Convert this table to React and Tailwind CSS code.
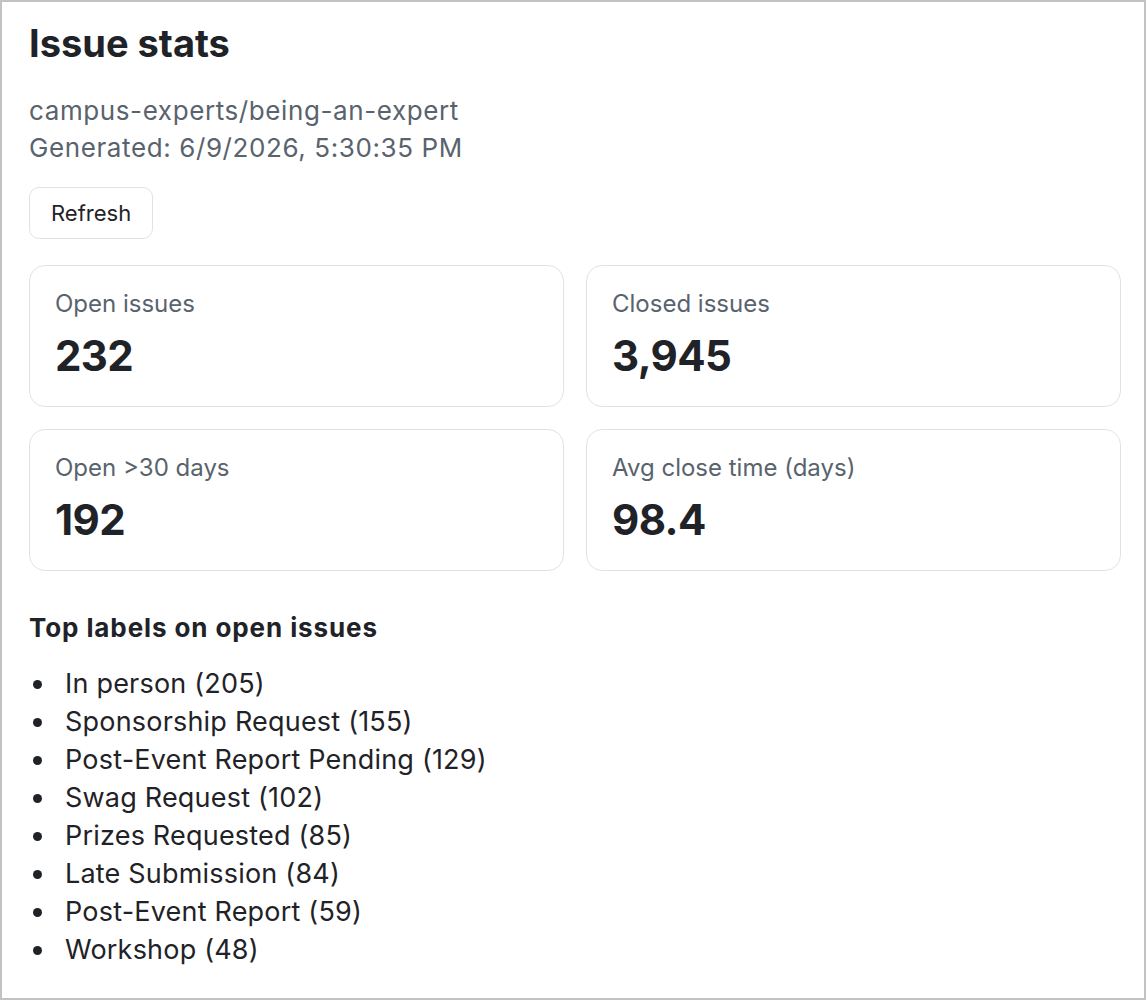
import React from 'react';

const stats = [
  { label: 'Open issues', value: '232' },
  { label: 'Closed issues', value: '3,945' },
  { label: 'Open >30 days', value: '192' },
  { label: 'Avg close time (days)', value: '98.4' },
];

const labels = [
  ['In person', 205],
  ['Sponsorship Request', 155],
  ['Post-Event Report Pending', 129],
  ['Swag Request', 102],
  ['Prizes Requested', 85],
  ['Late Submission', 84],
  ['Post-Event Report', 59],
  ['Workshop', 48],
];

function StatCard({ label, value }) {
  return (
    <div className="h-[142px] rounded-[16px] border border-[#dfe3e8] bg-white pl-[25px] pt-[20px]">
      <div className="text-[24px] leading-[36px] text-[#59636e]">{label}</div>
      <div className="mt-[9px] text-[42px] leading-[50px] font-bold tracking-[-0.6px] text-[#1f2328]">{value}</div>
    </div>
  );
}

export default function App() {
  return (
    <div
      className="h-[1000px] w-[1146px] border-2 border-[#c2c2c2] bg-white pl-[27px] pt-[18px] text-[#1f2328]"
      style={{ fontFamily: 'Inter, "Noto Sans", "Liberation Sans", sans-serif' }}
    >
      <h1 className="text-[38px] leading-[46px] font-bold">Issue stats</h1>

      <div className="mt-[26px] text-[26px] leading-[37px] tracking-[0.6px] text-[#59636e]">
        <div>campus-experts/being-an-expert</div>
        <div>Generated: 6/9/2026, 5:30:35 PM</div>
      </div>

      <button className="mt-[21px] h-[52px] rounded-[10px] border border-[#dfe3e8] bg-white px-[21px] text-[22px] leading-[30px] text-[#1f2328]">
        Refresh
      </button>

      <div className="mt-[26px] grid w-[1092px] grid-cols-2 gap-[22px]">
        {stats.map((s) => (
          <StatCard key={s.label} label={s.label} value={s.value} />
        ))}
      </div>

      <h2 className="mt-[41px] text-[26px] leading-[32px] font-bold tracking-[0.9px]">Top labels on open issues</h2>

      <ul className="mt-[21px]">
        {labels.map(([name, count]) => (
          <li key={name} className="flex items-center text-[27px] leading-[38px] tracking-[0.2px]">
            <span className="ml-[4px] h-[9px] w-[9px] rounded-full bg-[#1f2328]" />
            <span className="ml-[23px]">
              {name} ({count})
            </span>
          </li>
        ))}
      </ul>
    </div>
  );
}
